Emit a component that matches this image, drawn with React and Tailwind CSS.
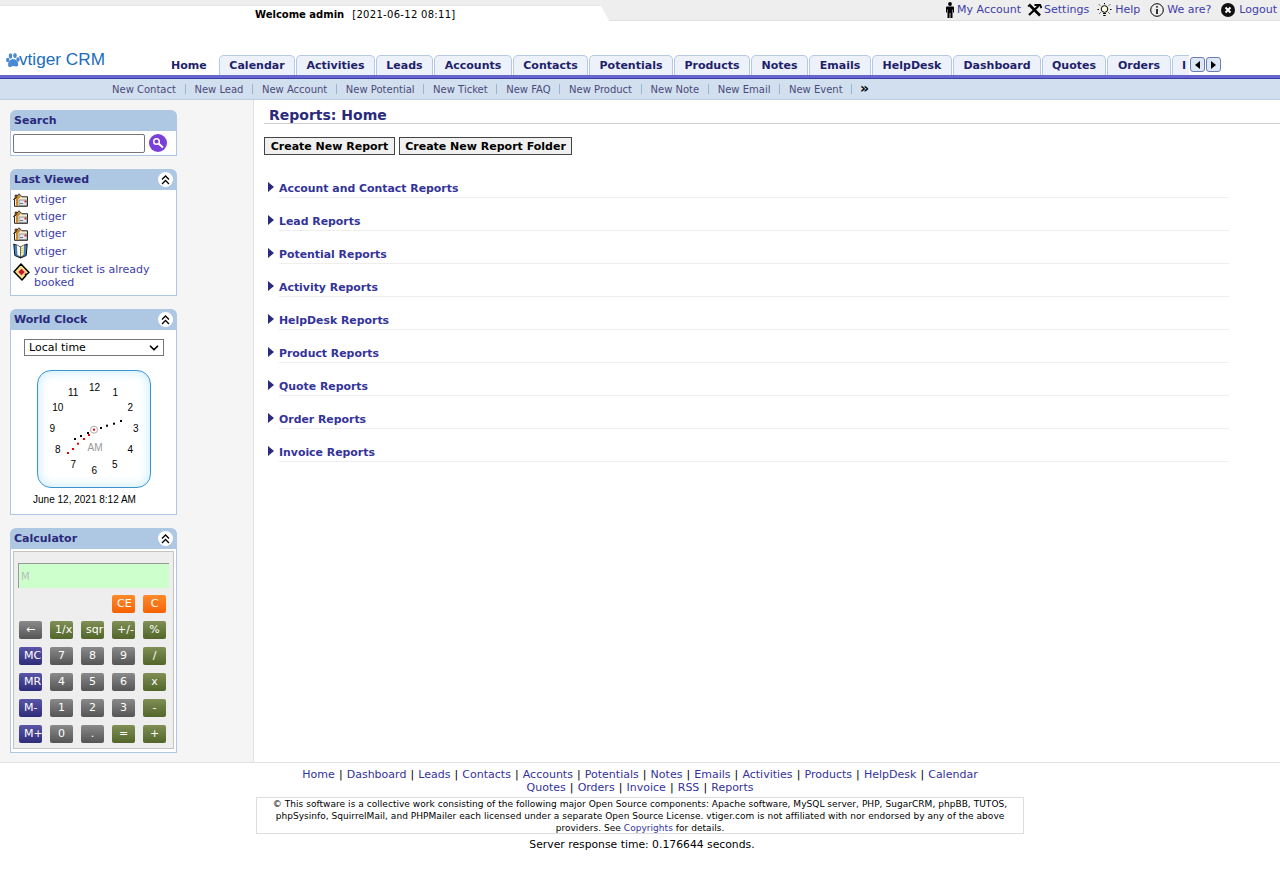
import React from 'react';
import { ChevronDown } from 'lucide-react';

const tabs = [
  ['Home', 'w-[48px] bg-white border-transparent justify-start'],
  ['Calendar', 'w-[76px]'],
  ['Activities', 'w-[79px]'],
  ['Leads', 'w-[57px]'],
  ['Accounts', 'w-[78px]'],
  ['Contacts', 'w-[75px]'],
  ['Potentials', 'w-[84px]'],
  ['Products', 'w-[76px]'],
  ['Notes', 'w-[57px]'],
  ['Emails', 'w-[62px]'],
  ['HelpDesk', 'w-[80px]'],
  ['Dashboard', 'w-[88px]'],
  ['Quotes', 'w-[64px]'],
  ['Orders', 'w-[64px]'],
];

const quickLinks = ['New Contact', 'New Lead', 'New Account', 'New Potential', 'New Ticket', 'New FAQ', 'New Product', 'New Note', 'New Email', 'New Event'];

const reportGroups = ['Account and Contact Reports', 'Lead Reports', 'Potential Reports', 'Activity Reports', 'HelpDesk Reports', 'Product Reports', 'Quote Reports', 'Order Reports', 'Invoice Reports'];

const footerOne = ['Home', 'Dashboard', 'Leads', 'Contacts', 'Accounts', 'Potentials', 'Notes', 'Emails', 'Activities', 'Products', 'HelpDesk', 'Calendar'];
const footerTwo = ['Quotes', 'Orders', 'Invoice', 'RSS', 'Reports'];

// clock face is a free canvas, places are taken from the picture
const clockNumbers = [
  ['12', 58, 17], ['1', 78.7, 22.3], ['2', 93.7, 37.3], ['3', 99.3, 58.3], ['4', 93.7, 79.3], ['5', 78.3, 94.3],
  ['6', 57.7, 100.3], ['7', 36.7, 94.3], ['8', 21.3, 79.3], ['9', 15.7, 58.3], ['10', 21.3, 37.3], ['11', 36.7, 22.3],
];

const blackDots = [[84, 51], [77, 53.7], [70, 55.7], [64, 58], [51, 63], [44, 66], [38, 69]];
const redDots = [[57, 59.7], [52, 65], [47, 69], [41, 73.7], [36, 79], [31, 83]];

const orange = 'bg-gradient-to-b from-[#ff8a2a] to-[#f56200]';
const green = 'bg-gradient-to-b from-[#7f8f55] to-[#53662a]';
const gray = 'bg-gradient-to-b from-[#8a8a8a] to-[#555555]';
const blue = 'bg-gradient-to-b from-[#5a55a8] to-[#2f2d78]';

const calcRows = [
  [['←', gray], ['1/x', green], ['sqr', green], ['+/-', green], ['%', green]],
  [['MC', blue], ['7', gray], ['8', gray], ['9', gray], ['/', green]],
  [['MR', blue], ['4', gray], ['5', gray], ['6', gray], ['x', green]],
  [['M-', blue], ['1', gray], ['2', gray], ['3', gray], ['-', green]],
  [['M+', blue], ['0', gray], ['.', gray], ['=', green], ['+', green]],
];

const CalcButton = ({ label, color }) => (
  <div className={`w-[23px] h-[18px] rounded-[2px] overflow-hidden px-[5px] text-center whitespace-nowrap text-white text-[11px] leading-[18px] ${color}`}>
    {label}
  </div>
);

const Collapse = () => (
  <div className="w-[15px] h-[15px] rounded-full bg-white flex items-center justify-center">
    <svg width="9" height="10" viewBox="0 0 9 10" fill="none" stroke="#000" strokeWidth="1.3">
      <path d="M1 4.5 4.5 1 8 4.5" />
      <path d="M1 9 4.5 5.5 8 9" />
    </svg>
  </div>
);

const Panel = ({ title, collapse, className, children }) => (
  <div className={`w-[167px] ml-[10px] ${className}`}>
    <div className="h-[21px] bg-[#aec7e3] rounded-t-[6px] flex items-center justify-between pl-[4px] pr-[4px]">
      <span className="pt-[1px] font-bold text-[11px] text-[#2a2a7c]">{title}</span>
      {collapse && <Collapse />}
    </div>
    <div className="border border-t-0 border-[#aec7e3] bg-white">{children}</div>
  </div>
);

const HouseIcon = () => (
  <svg width="15" height="14" viewBox="0 0 15 14" className="shrink-0">
    <path d="M.5 6.500 6 .8l3 3h5.500v9.500H1.500V6z" fill="#f4ecd2" stroke="#222" />
    <path d="M1 6.500 6 1.500l2 2-3 3v6.500H3V6z" fill="#c88a2e" />
    <path d="M2 2h2v2l-2 2z" fill="#8a5a1a" stroke="#222" strokeWidth=".6" />
    <rect x="6" y="7" width="8" height="5.500" fill="#dfe4ee" stroke="#666" strokeWidth=".6" />
    <rect x="11.500" y="7.600" width="2" height="1.800" fill="#d22222" />
    <path d="M7 10.500h3" stroke="#555" strokeWidth=".8" />
  </svg>
);

const BookIcon = () => (
  <svg width="15" height="16" viewBox="0 0 15 16" className="shrink-0">
    <path d="M.8 1 7.500 4v11L1.800 12.500z" fill="#2f8de0" stroke="#111" />
    <path d="M7.500 4 14.200 1l-1 11.500L7.500 15z" fill="#2f8de0" stroke="#111" />
    <path d="M3.500 1.500 7.500 4v10L4 12z" fill="#fff" stroke="#333" strokeWidth=".5" />
    <path d="M7.500 4 11.500 1.500 11 12l-3.500 2z" fill="#f7f2b8" stroke="#333" strokeWidth=".5" />
    <path d="M9 5v6" stroke="#b5a642" strokeDasharray="1 1" />
  </svg>
);

const TicketIcon = () => (
  <svg width="17" height="18" viewBox="0 0 17 18" className="shrink-0">
    <path d="M8 1 16 9.500 13.500 11.500l-1-.3.2 1.500L9 17 1 8.800z" fill="#f4df8a" stroke="#000" strokeWidth="1.500" strokeLinejoin="round" />
    <rect x="6.200" y="6.700" width="4.600" height="4.600" fill="#d0102a" transform="rotate(45 8.500 9)" />
  </svg>
);

const PersonIcon = () => (
  <svg width="10" height="16" viewBox="0 0 10 16" className="mr-[2px]">
    <circle cx="5" cy="2" r="1.900" fill="#000" />
    <path d="M1.500 4.500h7l.5 1v5H8V7.500h-.5V16H5.400v-5h-.8v5H2.500V7.500H2v3H1v-5z" fill="#000" />
  </svg>
);

const ToolsIcon = () => (
  <svg width="15" height="14" viewBox="0 0 15 14" fill="none" stroke="#000" className="mr-[2px]">
    <path d="M3 2.500 13 12.500" strokeWidth="2.600" />
    <path d="M11.500 3 2 12" strokeWidth="2.200" />
    <path d="M7.500 2h5.500l1.500 3" strokeWidth="2" />
    <path d="M1 3.500 3.500 1" strokeWidth="1.600" />
  </svg>
);

const BulbIcon = () => (
  <svg width="15" height="15" viewBox="0 0 15 15" fill="none" stroke="#000" className="mr-[3px]">
    <circle cx="7.500" cy="6" r="3.300" fill="#fffde0" />
    <path d="M6 10.500h3M6.300 12.500h2.400M7.500 0v1.300M2 1.500l1 1M13 1.500l-1 1M.5 6.500h1.500M13 6.500h1.500M2.500 10.500l1-1M12.500 10.500l-1-1" />
  </svg>
);

const InfoIcon = () => (
  <svg width="14" height="14" viewBox="0 0 14 14" fill="none" stroke="#000" className="mr-[3px]">
    <circle cx="7" cy="7" r="6.300" />
    <path d="M7 6v5" strokeWidth="1.600" />
    <circle cx="7" cy="3.800" r=".9" fill="#000" stroke="none" />
  </svg>
);

const LogoutIcon = () => (
  <svg width="14" height="14" viewBox="0 0 14 14" className="mr-[4px]">
    <circle cx="7" cy="7" r="7" fill="#111" />
    <path d="M4.500 4.500l5 5M9.500 4.500l-5 5" stroke="#fff" strokeWidth="2" />
  </svg>
);

const FooterLinks = ({ items }) => (
  <div className="leading-[13px]">
    {items.map((item, i) => (
      <span key={item}>
        {i > 0 && <span className="text-black mx-[.6px]"> | </span>}
        <span className="text-[#33339a]">{item}</span>
      </span>
    ))}
  </div>
);

export default function App() {
  return (
    <div className="w-[1280px] h-[869px] overflow-hidden bg-white font-['DejaVu_Sans',sans-serif] text-[11px] text-black">
      {/* top strip */}
      <div className="h-[21px] bg-[#eeeeee] border-b border-[#e0e0e0] flex justify-between">
        <div className="w-[612px] h-[21px] mt-[5px] bg-white [clip-path:polygon(0_0,98.100%_0,100%_100%,100%_100%,0_100%)] border-t border-[#e4e4e4] pl-[255px] pt-[2px] leading-[13px] text-[10px] whitespace-nowrap">
          <span className="font-bold">Welcome admin</span>
          <span className="ml-[8px] tracking-[.3px]">[2021-06-12 08:11]</span>
        </div>
        <div className="flex items-center h-[20px] pr-[3px] text-[#3d3da8] text-[11px] whitespace-nowrap">
          <PersonIcon />My Account
          <span className="w-[6px]" /><ToolsIcon />Settings
          <span className="w-[8px]" /><BulbIcon />Help
          <span className="w-[10px]" /><InfoIcon />We are?
          <span className="w-[10px]" /><LogoutIcon />Logout
        </div>
      </div>

      {/* logo and tabs */}
      <div className="h-[54px] flex items-end">
        <div className="w-[170px] h-full flex items-end pl-[6px] pb-[6px]">
          <svg width="14" height="16" viewBox="0 0 14 16" fill="#4a8ad4" className="shrink-0 -mr-[1px]">
            <ellipse cx="1.800" cy="7" rx="1.700" ry="2.300" />
            <ellipse cx="4.500" cy="3" rx="1.800" ry="2.700" />
            <ellipse cx="9" cy="2.500" rx="1.800" ry="2.500" />
            <ellipse cx="12" cy="6.500" rx="1.700" ry="2.300" />
            <path d="M7 6c3 0 6 3 5 6.500-1 2-3 .5-5 .5s-3.500 2.500-4.500.5C1 10 4 6 7 6z" />
          </svg>
          <span className="font-['Liberation_Sans',sans-serif] text-[#1a6cbf] text-[17.200px] leading-[20px] whitespace-nowrap">vtiger CRM</span>
        </div>
        <div className="flex gap-[1px] items-end">
          {tabs.map(([name, cls]) => (
            <div
              key={name}
              className={`h-[20px] pt-[1px] flex items-center justify-center rounded-t-[5px] border border-b-0 border-[#b5c9e2] bg-[#edf2fa] font-bold text-[11px] text-[#1f1f6b] ${cls}`}
            >
              {name}
            </div>
          ))}
          <div className="w-[17px] h-[20px] pt-[1px] overflow-hidden rounded-tl-[5px] border-l border-t border-[#b5c9e2] bg-[#edf2fa] font-bold text-[11px] text-[#1f1f6b] pl-[9px] flex items-center">
            I
          </div>
          <div className="flex self-start mt-[2px] gap-[1px]">
            <div className="w-[15px] h-[15px] rounded-[3px] border border-[#6a7fb5] bg-[#dfe7f5] flex items-center justify-center">
              <div className="border-y-[4px] border-y-transparent border-r-[5px] border-r-black" />
            </div>
            <div className="w-[15px] h-[15px] rounded-[3px] border border-[#6a7fb5] bg-[#dfe7f5] flex items-center justify-center">
              <div className="border-y-[4px] border-y-transparent border-l-[5px] border-l-black" />
            </div>
          </div>
        </div>
      </div>
      <div className="h-[4px] bg-[#6666cc] border-b border-[#3d3daa]" />

      {/* quick create */}
      <div className="h-[21px] bg-[#d2dfee] border-b border-[#bccde2] flex items-center pl-[112px] text-[10px] text-[#4a4a7a] whitespace-nowrap">
        {quickLinks.map((item) => (
          <span key={item} className="flex items-center">
            {item}
            <span className="w-px h-[10px] bg-[#9db4cf] mx-[8.750px]" />
          </span>
        ))}
        <span className="font-bold text-black text-[14px] -ml-[1px] leading-none -mt-[2px]">»</span>
      </div>

      <div className="h-[663px] flex border-b border-[#e2e2e2]">
        {/* sidebar */}
        <div className="w-[254px] shrink-0 bg-[#f5f5f5] border-r border-[#e2e2e2] pt-[10px]">
          <Panel title="Search">
            <div className="h-[24px] flex items-center pl-[2px]">
              <input className="w-[132px] h-[19px] border border-[#767676] rounded-[2px] bg-white" />
              <div className="ml-[4px] w-[18px] h-[18px] rounded-full bg-[#7b3fd9] flex items-center justify-center">
                <svg width="12" height="12" viewBox="0 0 12 12" fill="none" stroke="#fff">
                  <circle cx="4.500" cy="4.500" r="2.800" strokeWidth="1.500" />
                  <path d="M6.500 6.500 11 10.500" strokeWidth="2" />
                </svg>
              </div>
            </div>
          </Panel>

          <Panel title="Last Viewed" collapse className="mt-[13px]">
            <div className="h-[105px] pl-[2px] pt-[1px] text-[#3d3da8] text-[11px] leading-[13px]">
              {['vtiger', 'vtiger', 'vtiger'].map((t, i) => (
                <div key={i} className="h-[17px] flex items-center gap-[6px]"><HouseIcon />{t}</div>
              ))}
              <div className="h-[18px] flex items-center gap-[6px]"><BookIcon />vtiger</div>
              <div className="flex gap-[4px] mt-[3px]">
                <TicketIcon />
                <div className="w-[130px]">your ticket is already booked</div>
              </div>
            </div>
          </Panel>

          <Panel title="World Clock" collapse className="mt-[13px]">
            <div className="h-[184px] flex flex-col items-center">
              <div className="mt-[9px] ml-[1px] w-[140px] h-[17px] border border-[#767676] flex items-center justify-between pl-[4px] pr-[2px] text-[11px]">
                <span className="mt-[2px]">Local time</span>
                <ChevronDown size={14} strokeWidth={3} />
              </div>
              <div className="relative mt-[14px] w-[114px] h-[118px] rounded-[14px] border border-[#3b93d0] bg-white shadow-[inset_0_0_12px_#bfeaff] font-['Liberation_Sans',sans-serif] text-[10px]">
                {clockNumbers.map(([n, x, y]) => (
                  <span key={n} style={{ left: x - 1, top: y }} className="absolute -translate-x-1/2 -translate-y-1/2 leading-none">{n}</span>
                ))}
                <span className="absolute left-[50px] top-[72px] text-[#999999] leading-none">AM</span>
                <svg width="114" height="118" className="absolute left-[-1px] top-[-1px]">
                  <circle cx="57" cy="59.700" r="3.500" fill="none" stroke="#aaaaaa" />
                  {blackDots.map(([x, y]) => <rect key={x} x={x - 1} y={y - 1} width="2" height="2" fill="#000" />)}
                  {redDots.map(([x, y]) => <rect key={x} x={x - 1} y={y - 1} width="2" height="2" fill="#ee0000" />)}
                </svg>
              </div>
              <div className="mt-[6px] -ml-[18px] font-['Liberation_Sans',sans-serif] text-[10px] leading-[12px]">June 12, 2021 8:12 AM</div>
            </div>
          </Panel>

          <Panel title="Calculator" collapse className="mt-[13px]">
            <div className="h-[203px] p-[2px]">
              <div className="h-[198px] border border-[#c4c4c4] bg-[#eeeeee] pt-[11px] pl-[4px]">
                <div className="w-[151px] h-[25px] bg-[#ccffcc] border-l border-t border-[#999999] flex items-center pl-[2px] text-[10px] text-[#bbbbbb]">M</div>
                <div className="flex justify-end gap-[8px] w-[148px] mt-[7px]">
                  <CalcButton label="CE" color={orange} />
                  <CalcButton label="C" color={orange} />
                </div>
                <div className="mt-[8px] ml-[1px] flex flex-col gap-[8px]">
                  {calcRows.map((row, i) => (
                    <div key={i} className="flex gap-[8px]">
                      {row.map(([label, color]) => <CalcButton key={label} label={label} color={color} />)}
                    </div>
                  ))}
                </div>
              </div>
            </div>
          </Panel>
        </div>

        {/* main */}
        <div className="flex-1 pt-[5px] pl-[10px]">
          <div className="h-[19px] pt-[1px] border-b border-[#cccccc] pl-[5px] font-bold text-[14px] leading-[18px] text-[#2a2a7c]">Reports: Home</div>
          <div className="flex gap-[4px] mt-[13px]">
            <div className="w-[131px] h-[18px] pt-[2px] border border-[#444444] bg-[#f0f0f0] flex items-center justify-center font-bold text-[11px]">Create New Report</div>
            <div className="w-[173px] h-[18px] pt-[2px] border border-[#444444] bg-[#f0f0f0] flex items-center justify-center font-bold text-[11px]">Create New Report Folder</div>
          </div>
          <div className="mt-[20px] w-[965px]">
            {reportGroups.map((group) => (
              <div key={group} className="h-[33px] flex items-start">
                <div className="mt-[7px] ml-[4px] w-[11px] shrink-0">
                  <div className="w-0 border-y-[5px] border-y-transparent border-l-[6px] border-l-[#2a2a7c]" />
                </div>
                <div className="flex-1 h-[23px] border-b border-[#eeeeee] pt-[7px] font-bold text-[10.900px] leading-[14px] text-[#33339a]">{group}</div>
              </div>
            ))}
          </div>
        </div>
      </div>

      {/* footer */}
      <div className="text-center pt-[5px] text-[11px]">
        <FooterLinks items={footerOne} />
        <FooterLinks items={footerTwo} />
      </div>
      <div className="w-[768px] ml-[256px] mt-[3px] h-[37px] border border-[#dddddd] text-center text-[9px] leading-[12px] whitespace-nowrap tracking-[.04px]">
        <div>© This software is a collective work consisting of the following major Open Source components: Apache software, MySQL server, PHP, SugarCRM, phpBB, TUTOS,</div>
        <div>phpSysinfo, SquirrelMail, and PHPMailer each licensed under a separate Open Source License. vtiger.com is not affiliated with nor endorsed by any of the above</div>
        <div>providers. See <span className="text-[#33339a]">Copyrights</span> for details.</div>
      </div>
      <div className="text-center mt-[4px] pl-[4px] text-[10.800px] leading-[13px]">Server response time: 0.176644 seconds.</div>
    </div>
  );
}
